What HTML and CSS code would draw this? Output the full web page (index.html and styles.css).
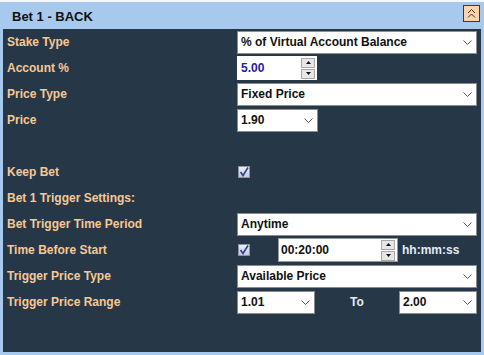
FILE: index.html
```html
<!DOCTYPE html>
<html lang="en">
<head>
    <title>Bet 1 - BACK</title>
    <link rel="stylesheet" href="styles.css">
</head>
<body>
<div class="panel">
    <div class="panel_head">
        <span class="title">Bet 1 - BACK</span>
        <button type="button" class="collapse">
            <svg width="9" height="11" viewBox="0 0 9 11">
                <path d="M1 5 L4.5 1.5 L8 5 M1 9.5 L4.5 6 L8 9.5" fill="none" stroke="#333" stroke-width="1"/>
            </svg>
        </button>
    </div>

    <div class="panel_body">
        <!-- stake -->
        <div class="row">
            <span class="label">Stake Type</span>
            <div class="field">
                <div class="select wide"><span>% of Virtual Account Balance</span><svg class="chev" width="9" height="5" viewBox="0 0 9 5"><path d="M0.5 0.5 L4.5 4.5 L8.5 0.5" fill="none" stroke="#555"/></svg></div>
            </div>
        </div>
        <div class="row">
            <span class="label">Account %</span>
            <div class="field">
                <div class="spinner small">
                    <span class="value blue">5.00</span>
                    <div class="spin_btns">
                        <span class="spin_btn"><svg width="5" height="3" viewBox="0 0 5 3"><path d="M0 3 L2.5 0 L5 3 Z" fill="#111"/></svg></span>
                        <span class="spin_btn"><svg width="5" height="3" viewBox="0 0 5 3"><path d="M0 0 L2.5 3 L5 0 Z" fill="#111"/></svg></span>
                    </div>
                </div>
            </div>
        </div>
        <div class="row">
            <span class="label">Price Type</span>
            <div class="field">
                <div class="select wide"><span>Fixed Price</span><svg class="chev" width="9" height="5" viewBox="0 0 9 5"><path d="M0.5 0.5 L4.5 4.5 L8.5 0.5" fill="none" stroke="#555"/></svg></div>
            </div>
        </div>
        <div class="row">
            <span class="label">Price</span>
            <div class="field">
                <div class="select narrow"><span>1.90</span><svg class="chev" width="9" height="5" viewBox="0 0 9 5"><path d="M0.5 0.5 L4.5 4.5 L8.5 0.5" fill="none" stroke="#555"/></svg></div>
            </div>
        </div>
        <div class="row"></div>
        <div class="row">
            <span class="label">Keep Bet</span>
            <div class="field">
                <span class="check"><svg width="10" height="10" viewBox="0 0 10 10"><path d="M1.5 5 L4 8.5 L9 0.5" fill="none" stroke="#2b3f96" stroke-width="1.6"/></svg></span>
            </div>
        </div>
        <div class="row">
            <span class="label">Bet 1 Trigger Settings:</span>
        </div>

        <!-- trigger -->
        <div class="row">
            <span class="label">Bet Trigger Time Period</span>
            <div class="field">
                <div class="select wide"><span>Anytime</span><svg class="chev" width="9" height="5" viewBox="0 0 9 5"><path d="M0.5 0.5 L4.5 4.5 L8.5 0.5" fill="none" stroke="#555"/></svg></div>
            </div>
        </div>
        <div class="row">
            <span class="label">Time Before Start</span>
            <div class="field">
                <span class="check"><svg width="10" height="10" viewBox="0 0 10 10"><path d="M1.5 5 L4 8.5 L9 0.5" fill="none" stroke="#2b3f96" stroke-width="1.6"/></svg></span>
                <div class="spinner time">
                    <span class="value">00:20:00</span>
                    <div class="spin_btns">
                        <span class="spin_btn"><svg width="5" height="3" viewBox="0 0 5 3"><path d="M0 3 L2.5 0 L5 3 Z" fill="#111"/></svg></span>
                        <span class="spin_btn"><svg width="5" height="3" viewBox="0 0 5 3"><path d="M0 0 L2.5 3 L5 0 Z" fill="#111"/></svg></span>
                    </div>
                </div>
                <span class="note">hh:mm:ss</span>
            </div>
        </div>
        <div class="row">
            <span class="label">Trigger Price Type</span>
            <div class="field">
                <div class="select wide"><span>Available Price</span><svg class="chev" width="9" height="5" viewBox="0 0 9 5"><path d="M0.5 0.5 L4.5 4.5 L8.5 0.5" fill="none" stroke="#555"/></svg></div>
            </div>
        </div>
        <div class="row">
            <span class="label">Trigger Price Range</span>
            <div class="field">
                <div class="select range"><span>1.01</span><svg class="chev" width="9" height="5" viewBox="0 0 9 5"><path d="M0.5 0.5 L4.5 4.5 L8.5 0.5" fill="none" stroke="#555"/></svg></div>
                <span class="to">To</span>
                <div class="select range"><span>2.00</span><svg class="chev" width="9" height="5" viewBox="0 0 9 5"><path d="M0.5 0.5 L4.5 4.5 L8.5 0.5" fill="none" stroke="#555"/></svg></div>
            </div>
        </div>
    </div>
</div>
</body>
</html>
```

FILE: styles.css
```css
* {
    box-sizing: border-box;
    font-family: "Liberation Sans", Arial, Helvetica, sans-serif;
}

html, body {
    margin: 0;
    height: 100%;
}

body {
    background-color: #a8c9ee;
    border-top: 2px solid #f4f8fd;
}

.panel {
    display: flex;
    flex-direction: column;
    height: 353px;
}

.panel_head {
    height: 27px;
    display: flex;
    align-items: center;
    justify-content: space-between;
    padding: 0 4px 0 12px;
}

.title {
    font-size: 13px;
    font-weight: bold;
    color: #111;
    margin-top: 1px;
}

.collapse {
    width: 17px;
    height: 17px;
    padding: 0;
    margin-top: -4px;
    border: 1px solid #3a3a3a;
    background-color: #fdd3aa;
    display: flex;
    align-items: center;
    justify-content: center;
}

.panel_body {
    margin: 0 3px 3px 3px;
    flex: 1;
    background-color: #263847;
}

.row {
    height: 26px;
    display: grid;
    grid-template-columns: 230px 240px;
    align-items: center;
    padding-left: 4px;
}

.label {
    font-size: 12px;
    font-weight: bold;
    color: #f6c896;
}

.field {
    display: flex;
    align-items: center;
    height: 26px;
}

.select {
    height: 23px;
    display: flex;
    align-items: center;
    justify-content: space-between;
    background-color: #fff;
    border: 1px solid #8c8c8c;
    padding: 0 4px 0 3px;
    font-size: 12px;
    font-weight: bold;
    color: #111;
}

.select.wide {
    width: 241px;
}

.select.narrow {
    width: 81px;
}

.select.range {
    width: 78px;
}

.chev {
    margin-top: 1px;
}

.to {
    width: 84px;
    text-align: center;
    font-size: 12px;
    font-weight: bold;
    color: #e4ecf6;
}

.spinner {
    height: 24px;
    display: flex;
    align-items: center;
    justify-content: space-between;
    background-color: #fff;
    padding: 0 2px 0 4px;
    font-size: 12px;
    font-weight: bold;
    color: #111;
}

.spinner.small {
    width: 80px;
}

.spinner.time {
    width: 120px;
    margin-left: 28px;
    padding-left: 2px;
    border: 1px solid #9a9a9a;
}

.value.blue {
    color: #22229a;
}

.spin_btns {
    display: flex;
    flex-direction: column;
    gap: 1px;
}

.spin_btn {
    width: 14px;
    height: 10px;
    display: flex;
    align-items: center;
    justify-content: center;
    background-color: #e6e6e6;
    border: 1px solid #a8a8a8;
}

.check {
    width: 12px;
    height: 12px;
    margin-left: 1px;
    display: flex;
    align-items: center;
    justify-content: center;
    background: linear-gradient(#eceef4, #c9cbd8);
    border: 1px solid #8e90a4;
}

.note {
    margin-left: 4px;
    font-size: 12px;
    font-weight: bold;
    color: #e4ecf6;
}
```
